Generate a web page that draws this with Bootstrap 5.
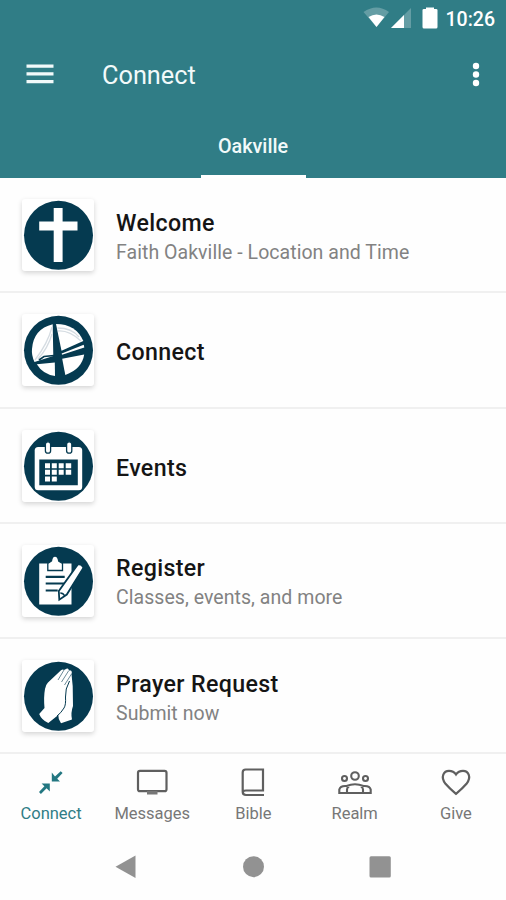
<!DOCTYPE html>
<html lang="en">
<head>
<meta charset="utf-8">
<meta name="viewport" content="width=device-width, initial-scale=1">
<title>Connect</title>
<link href="https://cdn.jsdelivr.net/npm/bootstrap@5.3.0/dist/css/bootstrap.min.css" rel="stylesheet">
<style>
body{font-family:Roboto,"Liberation Sans",sans-serif;width:506px;height:900px;overflow:hidden;background:#fefefe}
svg{display:block;flex:none}
.app-head{background:#307d86;color:#fff;height:178px}
.status{height:37px;padding-right:11px}
.clock{font-size:19.5px;font-weight:500;line-height:37px;padding-top:1px}
.bar{height:75px;padding:0 20px 0 24px}
.bar-title{font-size:25.3px;line-height:75px;padding-top:1px;margin-left:47px;color:#f2fafa}
.tab-link{width:105px;height:66px;border-bottom:3px solid #fff;font-size:19.8px;font-weight:500;line-height:70px;color:#f2fafa}
.entry{height:115.25px;padding:1px 22px 0;border-bottom:2px solid #f0f0f0}
.thumb{width:72px;height:72px;background:#fff;border-radius:3px;box-shadow:0 2px 5px rgba(0,0,0,.17)}
.entry-text{margin-left:22px;padding-top:5px}
.entry-title{font-size:23.2px;font-weight:500;line-height:29px;color:#151515;letter-spacing:.35px}
.entry-sub{font-size:19.5px;line-height:29px;color:#828282;letter-spacing:.05px}
.tabs{height:80px;color:#5f5f5f}
.tabs a{color:#777;width:101.2px;font-size:16.5px;line-height:22px;padding:11px 0 0 1px}
.tabs a svg{margin-bottom:2px}
.tabs a.on{color:#307d86}
.sys{height:66px}
</style>
<script src="https://cdn.jsdelivr.net/npm/bootstrap@5.3.0/dist/js/bootstrap.bundle.min.js"></script>
</head>
<body class="d-flex flex-column">
<header class="app-head d-flex flex-column flex-shrink-0">
  <div class="status d-flex justify-content-end align-items-center">
    <svg width="84" height="37" viewBox="361 0 84 37" fill="#fff"><path opacity=".25" d="M362.500 12Q375.500 3 388 12L375.500 27Z"/><path d="M367.500 17Q375.500 12 383.500 17L375.500 27Z"/><path opacity=".25" d="M390 28L410 8V28Z"/><path d="M390 28L403 15V28Z"/><path d="M421.500 10Q421.500 9 423 9H425V7.500H433V9H435Q436.500 9 436.500 10V27Q436.500 28.500 435 28.500H423Q421.500 28.500 421.500 27Z"/></svg>
    <span class="clock">10:26</span>
  </div>
  <div class="bar d-flex align-items-center">
    <svg width="31" height="24" viewBox="0 0 31 24" fill="#f2fafa"><path d="M2.500 1.500h27v3.300h-27zM2.500 9.300h27v3.300h-27zM2.500 17h27v3.300h-27z"/></svg>
    <span class="bar-title">Connect</span>
    <svg class="ms-auto" width="20" height="28" viewBox="0 0 20 28" fill="#fff"><circle cx="10" cy="5" r="3.200"/><circle cx="10" cy="13.500" r="3.200"/><circle cx="10" cy="22" r="3.200"/></svg>
  </div>
  <div class="tab-link mx-auto text-center">Oakville</div>
</header>

<main class="flex-shrink-0">
  <div class="entry d-flex align-items-center">
    <div class="thumb"><svg viewBox="0 0 72 72"><circle cx="36.500" cy="36.300" r="34.500" fill="#053a50"/><path fill="#fff" d="M31.700 9h8.900v13.500h14.900v9H40.600V63h-8.900V31.500h-14.500v-9h14.500z"/></svg></div>
    <div class="entry-text"><div class="entry-title">Welcome</div><div class="entry-sub">Faith Oakville - Location and Time</div></div>
  </div>
  <div class="entry d-flex align-items-center">
    <div class="thumb"><svg viewBox="0 0 72 72"><circle cx="36.500" cy="36.300" r="34.500" fill="#053a50"/><g fill="#fff"><path d="M30.700 10.300L31.300 42L12.500 48Q9.300 41 10 35Q11.500 15 30.700 10.300Z"/><path d="M34 10Q54 10 61.300 27L39.500 36.800Z"/><path d="M39.700 39.400L61.700 30.800L62.300 33.500L40 40.700Z"/><path d="M14.800 50.300L32.800 48.500L33 62Q21 60.500 14.800 50.300Z"/><path d="M40.200 44.800L62.200 40.500Q60 55 43.300 61Z"/></g><g fill="none" stroke="#d5dce2" stroke-width="1.300"><path d="M30 13Q26 29 13 46M30 20Q26 34 16 45M35.500 14Q50 14 57 23M36 17Q47 16 59 27"/></g><path d="M17 46l5-3.500 10-1" fill="none" stroke="#053a50" stroke-width="1.600"/></svg></div>
    <div class="entry-text"><div class="entry-title">Connect</div></div>
  </div>
  <div class="entry d-flex align-items-center">
    <div class="thumb"><svg viewBox="0 0 72 72"><circle cx="36.500" cy="36.300" r="34.500" fill="#053a50"/><rect x="12.700" y="17" width="47.500" height="43.300" rx="3.500" fill="#fff"/><path d="M17.300 29.500h38.500v25.700H17.300z" fill="#053a50"/><g fill="#fff" stroke="#053a50" stroke-width="1.300"><rect x="23.400" y="11.800" width="5.200" height="11.400" rx="2.500"/><rect x="44.600" y="11.800" width="5.200" height="11.400" rx="2.500"/></g><path fill="#fff" d="M23 33.200h5v5h-5zM29.800 33.200h5v5h-5zM36.700 33.200h5v5h-5zM43.700 33.200h5.500v5h-5.500zM23 39.800h5v5h-5zM29.800 39.800h5v5h-5zM36.700 39.800h5v5h-5zM43.700 39.800h5.500v5h-5.500zM23 46.400h5v5h-5zM29.800 46.400h5v5h-5z"/></svg></div>
    <div class="entry-text"><div class="entry-title">Events</div></div>
  </div>
  <div class="entry d-flex align-items-center">
    <div class="thumb"><svg viewBox="0 0 72 72"><circle cx="36.500" cy="36.300" r="34.500" fill="#053a50"/><path d="M17.200 18.500h32.300v41H17.200z" fill="#fff"/><path d="M25.800 25.500v-7l3.700-2.500q.5-5 3.500-5t3.700 5l3.800 2.500v7z" fill="#fff" stroke="#053a50" stroke-width="1.300"/><path d="M23.700 31.800h19M23.700 38.500h19M23.700 45.500h12" stroke="#053a50" stroke-width="2.200"/><path d="M56 19.200q3.800-.2 5.500 3.400L44.800 49.500L37.300 54.700L36.800 46z" fill="#fff" stroke="#053a50" stroke-width="1.800"/><path d="M38.300 48q3 0 4.500 3" fill="none" stroke="#053a50" stroke-width="1.300"/></svg></div>
    <div class="entry-text"><div class="entry-title">Register</div><div class="entry-sub">Classes, events, and more</div></div>
  </div>
  <div class="entry d-flex align-items-center">
    <div class="thumb"><svg viewBox="0 0 72 72"><circle cx="36.500" cy="36.300" r="34.500" fill="#053a50"/><path fill="#fff" d="M26 22.500L39 10.200Q41 8.800 42 10L45 8.500Q47 8.300 46.700 10.500L49 10.500Q50.500 11.500 49.500 14L50.700 26L51 46Q48.500 53 50 59.500L39 63.300Q36 59 36.300 55L26.300 63Q19.500 60 17.200 54L22.500 48Q21.500 37 23 29Q23.500 25 26 22.500Z"/><path fill="none" stroke="#456c7d" stroke-width=".8" d="M42 10L36 20M46.500 11L39.500 22M49.500 14L42.500 25"/><path fill="none" stroke="#053a50" stroke-width="1" d="M47.500 21Q43 29 43.500 37Q44 45 42 48Q39 53 35 56"/></svg></div>
    <div class="entry-text"><div class="entry-title">Prayer Request</div><div class="entry-sub">Submit now</div></div>
  </div>
</main>

<nav class="tabs d-flex flex-shrink-0">
  <a class="on text-decoration-none d-flex flex-column align-items-center"><svg width="40" height="36" viewBox="0 0 40 36"><path fill="#237781" d="M20.800 7.500V16.500H29L26.200 13.700L31.600 8L29.700 6.200L24 11.600ZM18.800 18.500H10.600L13.400 21.200L8 27L9.900 28.900L15.600 23.300L18.800 26.500Z"/></svg>Connect</a>
  <a class="text-decoration-none d-flex flex-column align-items-center"><svg width="40" height="36" viewBox="0 0 40 36"><rect x="6" y="5.800" width="28.500" height="20.400" rx="2" fill="none" stroke="#5f5f5f" stroke-width="2.200"/><path d="M15 26h10.500v3.500H15z" fill="#777"/></svg>Messages</a>
  <a class="text-decoration-none d-flex flex-column align-items-center"><svg width="40" height="36" viewBox="0 0 40 36" fill="none" stroke="#5f5f5f" stroke-width="2.200"><path d="M31 30H13q-3.300 0-3.300-3.500V7.500q0-3 3-3H30v21H13q-3.300 0-3.300 2.200"/></svg>Bible</a>
  <a class="text-decoration-none d-flex flex-column align-items-center"><svg width="40" height="36" viewBox="0 0 40 36" fill="none" stroke="#5f5f5f" stroke-width="2.100"><circle cx="20" cy="11" r="3.800"/><circle cx="9.500" cy="13.500" r="2.500"/><circle cx="30.500" cy="13.500" r="2.500"/><path d="M12 28H4.300v-3.500q1-4 7.200-3.500 8.500-3.500 17 0 6.200-.5 7.200 3.500V28zM12 28v-3.500q0-2 2-3M28 28v-3.500q0-2-2-3"/></svg>Realm</a>
  <a class="text-decoration-none d-flex flex-column align-items-center"><svg width="40" height="36" viewBox="0 0 40 36" fill="none" stroke="#5f5f5f" stroke-width="2.200"><path d="M20 28.800Q13.500 23.500 9.500 18.800C4 11.500 8 5.800 13 5.800Q17.500 5.800 20 9.500Q22.500 5.800 27 5.800C32 5.800 36 11.500 30.500 18.800Q26.500 23.500 20 28.800Z"/></svg>Give</a>
</nav>
<footer class="sys"><svg width="506" height="66" viewBox="0 834 506 66" fill="#929292"><path d="M115.500 866.700L135.500 855.500V878z"/><circle cx="253.500" cy="866.700" r="10.500"/><rect x="369.500" y="856.200" width="21.300" height="21.300" rx="1.500"/></svg></footer>
</body>
</html>
